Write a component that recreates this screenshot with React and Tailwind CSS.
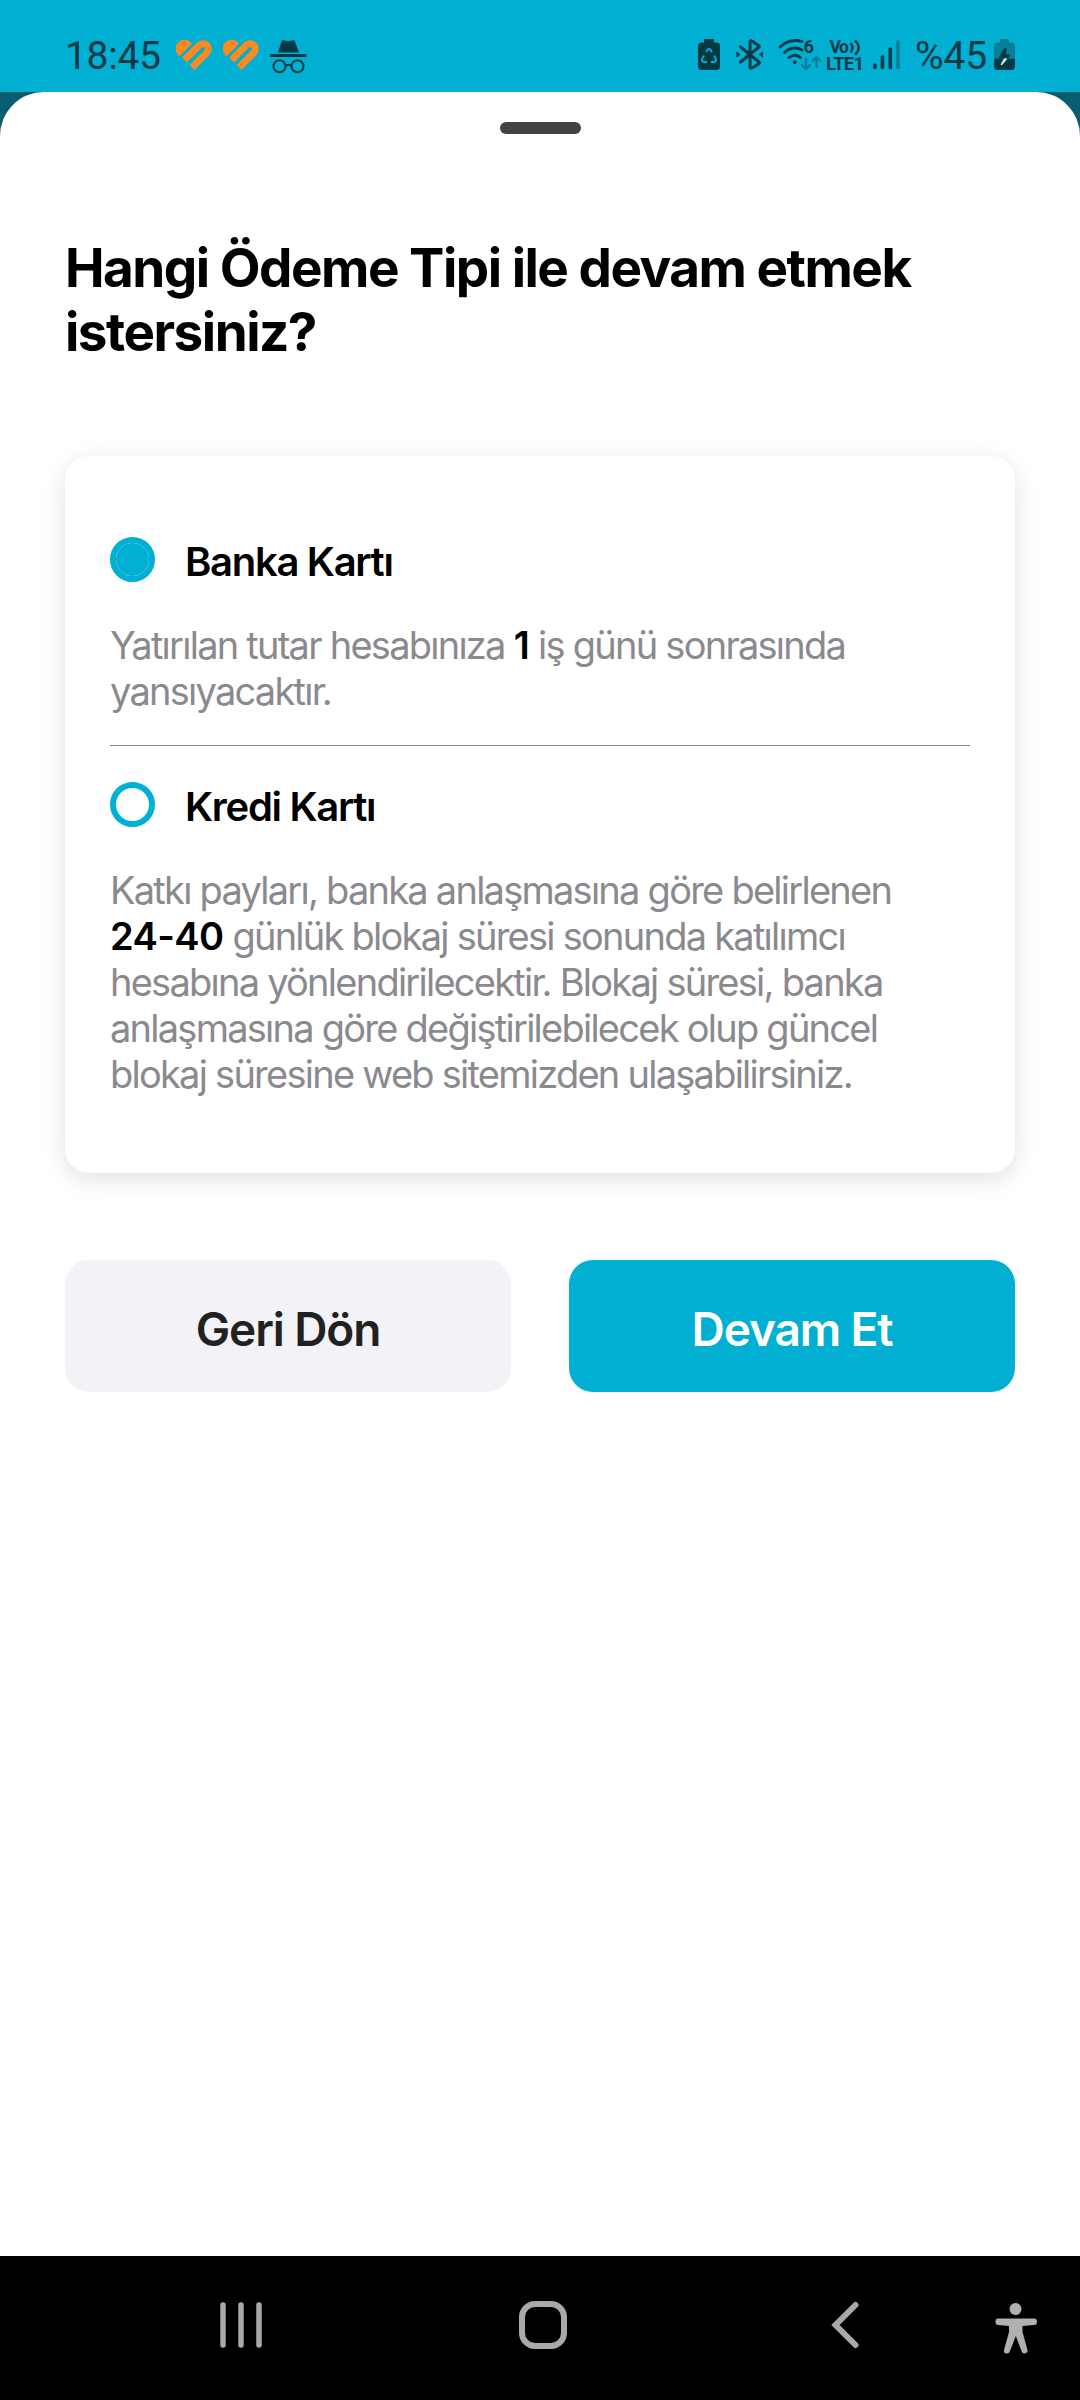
import { useState } from "react";

const Heart = () => (
  <svg width="36" height="31" viewBox="0 0 36 31" fill="none">
    <path d="M3.500 16.200 A9 9 0 1 1 16 3.700Z" fill="#fb8a21" />
    <path
      d="M8.500 20 L23.250 5.250 A5.300 5.300 0 0 1 30.750 12.750 L16 27.500"
      stroke="#fb8a21"
      strokeWidth="6.900"
    />
  </svg>
);

const Incognito = () => (
  <svg width="37" height="34" viewBox="0 0 37 34" fill="none">
    <path
      d="M8 12.500 L11.500 1.500 Q12.500 -0.500 15 0.500 Q18 1.500 21.500 0.500 Q24 -0.500 25 1.500 L29 12.500Z"
      fill="#053a45"
    />
    <path d="M0 15.500 H36.500" stroke="#053a45" strokeWidth="2.800" />
    <circle cx="9.500" cy="26.200" r="6" stroke="#053a45" strokeWidth="2" />
    <circle cx="27.500" cy="26.200" r="6" stroke="#053a45" strokeWidth="2" />
    <path d="M15.500 26 Q18.500 23.500 21.500 26" stroke="#053a45" strokeWidth="2" />
  </svg>
);

const BatterySaver = () => (
  <svg width="22" height="31" viewBox="0 0 22 31" fill="none">
    <path
      d="M7 0 H15 Q16 0 16 1 V3.500 H18.500 Q22 3.500 22 7 V27 Q22 31 18.500 31 H3.500 Q0 31 0 27 V7 Q0 3.500 3.500 3.500 H6 V1 Q6 0 7 0Z"
      fill="#053a45"
    />
    <path
      d="M8 13 L9.500 10.800 Q11 9 12.500 10.800 L14 13.200 M16.200 16.500 L18 20 Q18.500 22.500 16 23 H13 M9 23 H6 Q3.500 22.500 4 20 L6 16.500"
      stroke="#01afd3"
      strokeWidth="1.900"
    />
  </svg>
);

const Bluetooth = () => (
  <svg width="28" height="31" viewBox="0 0 28 31" fill="none">
    <path
      d="M4.500 8 L23 23 Q24 24 22.500 25 L16 29 Q14 30 14 28 V3 Q14 1 16 2 L22.500 6.500 Q24 7.500 22.500 8.500 L4.500 23"
      stroke="#053a45"
      strokeWidth="3"
      strokeLinecap="round"
      strokeLinejoin="round"
    />
    <path d="M0.500 12.500 L5 15.500 L0.500 18.500Z M27 12.500 L22.500 15.500 L27 18.500Z" fill="#053a45" />
  </svg>
);

const Wifi = () => (
  <svg width="44" height="32" viewBox="0 0 44 32" fill="none" className="overflow-visible">
    <g stroke="#053a45" strokeWidth="2.800" strokeLinecap="round">
      <path d="M2 8 Q12 -1 24 2.500" />
      <path d="M6.500 13.500 Q15 6 24 11" />
      <path d="M11 18.500 Q17 14 22.500 18.500" />
    </g>
    <circle cx="16.800" cy="23" r="2" fill="#053a45" />
    <text
      x="25.500"
      y="13.500"
      fill="#053a45"
      fontFamily="Roboto, sans-serif"
      fontSize="18.500"
      fontWeight="700"
    >
      6
    </text>
    <g stroke="#077f98" strokeWidth="2.400" strokeLinecap="round" strokeLinejoin="round">
      <path d="M28 20 V30 M24 26 L28 30 L32 26" />
      <path d="M38.500 28 V18 M34.500 22 L38.500 18 L42.500 22" />
    </g>
  </svg>
);

const VoLte = () => (
  <svg width="38" height="32" viewBox="0 0 38 32" fill="none" className="overflow-visible">
    <g fill="#053a45" fontFamily="Roboto, sans-serif" fontWeight="700">
      <text x="3.500" y="14" fontSize="17.500" textLength="19.500">
        Vo
      </text>
      <text x="0" y="31" fontSize="18.500" textLength="38">
        LTE1
      </text>
    </g>
    <path
      d="M24.500 4 Q28.500 8.500 24.500 13.500 M29 1.500 Q36.500 8.500 29 15.500"
      stroke="#053a45"
      strokeWidth="2.400"
    />
  </svg>
);

const Signal = () => (
  <svg width="27" height="30" viewBox="0 0 27 30" strokeWidth="3.600" strokeLinecap="round">
    <path d="M2 25 V27.500 M9.500 17 V27.500 M17.300 9 V27.500" stroke="#053a45" />
    <path d="M25 2 V27.500" stroke="#077f98" />
  </svg>
);

const BatteryCharging = () => (
  <svg width="21" height="31" viewBox="0 0 21 31" fill="none">
    <path
      d="M7 0 H14 Q15 0 15 1 V3.500 H18 Q21 3.500 21 7 V19.500 H0 V7 Q0 3.500 3 3.500 H6 V1 Q6 0 7 0Z"
      fill="#077f98"
    />
    <path d="M0 19.500 H21 V27 Q21 31 17.500 31 H3.500 Q0 31 0 27Z" fill="#053a45" />
    <path d="M13 9.500 L10 9.500 L5 18 V19.500 H14.500 L16.500 15.500 L12 15Z" fill="#053a45" />
    <path d="M10 19.500 H13.500 L8 26 H6.500Z" fill="#e6fbff" />
  </svg>
);

const StatusBar = () => (
  <header className="flex h-[92px] items-start justify-between bg-[#01afd3] pt-[39px] pr-[65px] pl-[65px] font-[Roboto,sans-serif] text-[#053a45]">
    <div className="flex">
      <span className="-mt-[4px] w-[111px] text-[39px] leading-[42px] tracking-[-0.3px]">
        18:45
      </span>
      <div className="mt-px flex gap-[11px]">
        <Heart />
        <Heart />
        <Incognito />
      </div>
    </div>
    <div className="flex">
      <BatterySaver />
      <div className="ml-[16px]">
        <Bluetooth />
      </div>
      <div className="ml-[14px]">
        <Wifi />
      </div>
      <div className="ml-[4px]">
        <VoLte />
      </div>
      <div className="mt-px ml-[9px]">
        <Signal />
      </div>
      <span className="-mt-[4px] ml-[15px] w-[72px] text-[39px] leading-[42px] tracking-[-0.1px]">
        %45
      </span>
      <div className="ml-[7px]">
        <BatteryCharging />
      </div>
    </div>
  </header>
);

const PaymentOption = ({ label, selected, onSelect, children }) => (
  <div>
    <button
      type="button"
      role="radio"
      aria-checked={selected}
      onClick={onSelect}
      className="flex h-[45px] items-center"
    >
      <span className="flex size-[45px] items-center justify-center rounded-full border-[6px] border-[#01afd3]">
        {selected && <span className="size-[33px] shrink-0 rounded-full bg-[#01afd3]" />}
      </span>
      <span className="mt-[5px] ml-[30px] text-[40px] font-semibold tracking-[-1.3px] text-black">
        {label}
      </span>
    </button>
    <p className="mt-[40px] text-[38px] leading-[46px] tracking-[-1.75px] text-[#8a8a8e]">
      {children}
    </p>
  </div>
);

const Strong = ({ children }) => (
  <b className="font-semibold tracking-[-0.6px] text-black">{children}</b>
);

const NavigationBar = () => (
  <nav className="h-[144px] bg-black">
    <svg width="1080" height="144" viewBox="0 0 1080 144" fill="none" stroke="#a9a9a9">
      <path
        d="M223 49 V89 M241 49 V89 M259 49 V89"
        strokeWidth="5.500"
        strokeLinecap="round"
      />
      <rect x="522" y="48" width="42" height="42" rx="13" strokeWidth="6" />
      <path d="M855.500 49 L835.500 69 L855.500 89" strokeWidth="6" strokeLinecap="round" />
      <g fill="#b0b0b0" stroke="none">
        <circle cx="1015.500" cy="53" r="6" />
        <path d="M998 62.500 H1034 Q1037 62.500 1037 65.500 Q1037 69 1034 69 L1022.500 70 V76 L1027.500 94 Q1028 97 1025 97.500 Q1022.500 98 1021.500 95 L1015.800 80 L1010 95 Q1009 98 1006 97.500 Q1003.500 97 1004 94 L1009 76 V70 L998 69 Q995.500 69 995.500 65.500 Q995.500 62.500 998 62.500Z" />
      </g>
    </svg>
  </nav>
);

const App = () => {
  const [method, setMethod] = useState("debit");

  return (
    <div className="flex h-[2400px] w-[1080px] flex-col bg-[#065e70] font-[Inter,sans-serif]">
      <StatusBar />
      <main className="flex flex-1 flex-col rounded-t-[44px] bg-white px-[65px]">
        <div className="mt-[30px] ml-[435px] h-[12px] w-[81px] rounded-full bg-[#424242]" />
        <h1 className="mt-[102px] text-[53px] leading-[64px] font-bold tracking-[-1.5px] text-black">
          Hangi Ödeme Tipi ile devam etmek
          <br />
          istersiniz?
        </h1>
        <section className="mt-[92px] h-[717px] rounded-[24px] bg-white px-[45px] pt-[81px] shadow-[0_6px_24px_rgba(0,0,0,0.12)]">
          <PaymentOption
            label="Banka Kartı"
            selected={method === "debit"}
            onSelect={() => setMethod("debit")}
          >
            Yatırılan tutar hesabınıza <Strong>1</Strong> iş günü sonrasında
            <br />
            yansıyacaktır.
          </PaymentOption>
          <hr className="mt-[31px] mb-[36px] border-[#858589]" />
          <PaymentOption
            label="Kredi Kartı"
            selected={method === "credit"}
            onSelect={() => setMethod("credit")}
          >
            Katkı payları, banka anlaşmasına göre belirlenen
            <br />
            <Strong>24-40</Strong> günlük blokaj süresi sonunda katılımcı
            <br />
            hesabına yönlendirilecektir. Blokaj süresi, banka
            <br />
            anlaşmasına göre değiştirilebilecek olup güncel
            <br />
            blokaj süresine web sitemizden ulaşabilirsiniz.
          </PaymentOption>
        </section>
        <div className="mt-[87px] grid grid-cols-2 gap-[58px] text-[46px] font-semibold tracking-[-1.1px]">
          <button
            type="button"
            className="h-[132px] rounded-[24px] bg-[#f2f2f7] pt-[6px] text-[#212121]"
          >
            Geri Dön
          </button>
          <button type="button" className="h-[132px] rounded-[24px] bg-[#01afd3] pt-[6px] text-white">
            Devam Et
          </button>
        </div>
      </main>
      <NavigationBar />
    </div>
  );
};

export default App;
